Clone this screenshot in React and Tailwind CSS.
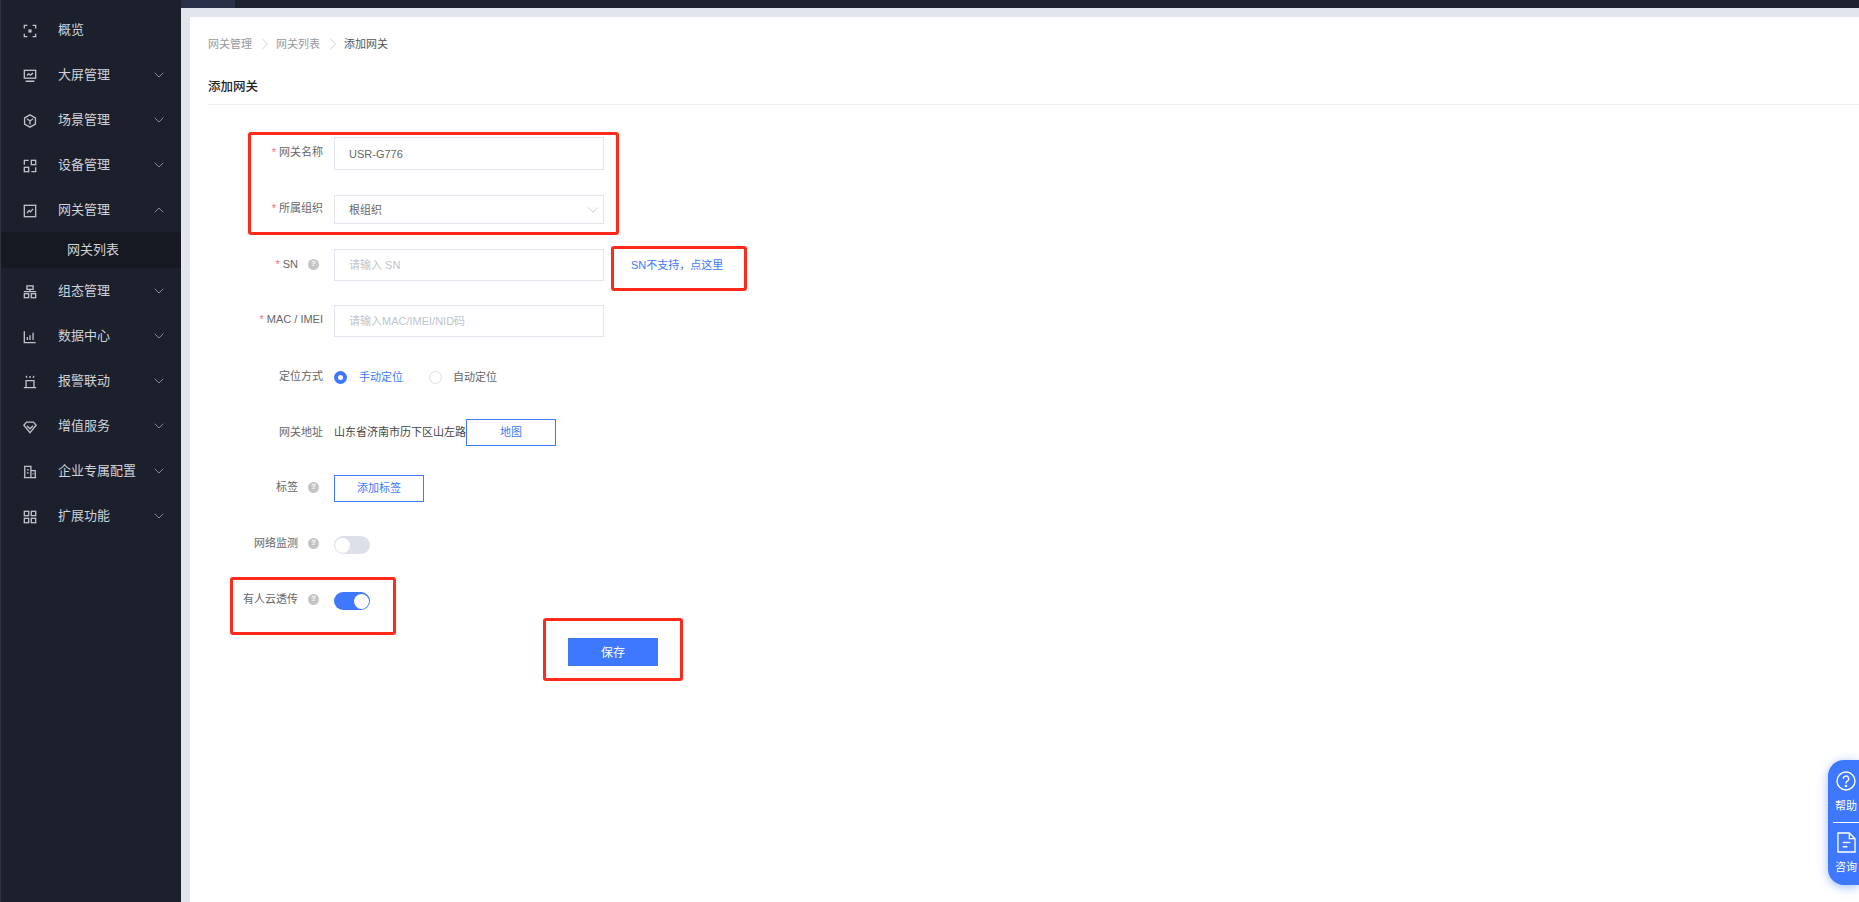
import React from 'react';
import { ChevronDown, ChevronUp, ChevronRight } from 'lucide-react';

const cn = '"Liberation Sans", "Noto Sans CJK SC", sans-serif';

// 侧边栏图标
const icons = {
  overview: (
    <>
      <path d="M1.5 5V1.5H5M11 1.5h3.5V5M14.5 11v3.5H11M5 14.5H1.5V11" />
      <rect x="6.2" y="6.2" width="3.6" height="3.6" fill="currentColor" stroke="none" />
    </>
  ),
  screen: (
    <>
      <rect x="1.5" y="1.5" width="13" height="9" />
      <path d="M4.5 7.5l2-2 2 1.5 3-2.5M3 14h10" />
    </>
  ),
  scene: (
    <>
      <path d="M8 1l6.2 3.5v7L8 15l-6.2-3.5v-7z" />
      <path d="M4.5 5.5L8 8l3.5-2.5M8 8v4" />
    </>
  ),
  device: (
    <>
      <path d="M6.5 1.5h-5v5" />
      <rect x="9.5" y="1.5" width="5" height="5" />
      <rect x="1.5" y="9.5" width="5" height="5" />
      <path d="M14.5 9.5v5h-5" />
    </>
  ),
  gateway: (
    <>
      <rect x="1.5" y="1.5" width="13" height="13" />
      <path d="M4.5 10.5l2.5-3 1.5 1.5 3-3.5" />
    </>
  ),
  config: (
    <>
      <rect x="4.5" y="1" width="7" height="4" />
      <path d="M1 7.5h14M8 5v2.5" />
      <rect x="1.5" y="10" width="5" height="4.5" />
      <rect x="9.5" y="10" width="5" height="4.5" />
    </>
  ),
  data: <path d="M1.5 1.5v13h13M5 11.5V8M8 11.5V6M11.5 11.5V3" />,
  alarm: <path d="M1 14.5h14M3.5 14.5V6.5h9v8M8 1v2.5M3.5 1l1 2.2M12.5 1l-1 2.2" />,
  service: (
    <>
      <path d="M1 6l3-3.5h8L15 6l-7 8.5z" />
      <path d="M4.5 6.5L8 10l3.5-3.5" />
    </>
  ),
  enterprise: <path d="M1 14.5h14M2 14.5V1.5h7v13M9 6.5h5v8M4.5 5.5h2M4.5 9h2M11 10h1" />,
  extend: (
    <>
      <rect x="1.5" y="1.5" width="5" height="5" />
      <rect x="9.5" y="1.5" width="5" height="5" />
      <rect x="1.5" y="9.5" width="5" height="5" />
      <rect x="9.5" y="9.5" width="5" height="5" />
    </>
  ),
};

function MenuItem({ icon, label, arrow, open }) {
  return (
    <div className="flex h-[45px] items-center pl-[22px] pr-[14px] text-[13px] text-[#cfd2d9]">
      <svg
        viewBox="0 0 16 16"
        fill="none"
        stroke="currentColor"
        strokeWidth="1.5"
        className="mt-[3px] h-[14px] w-[14px] text-[#c0c3cb]"
      >
        {icons[icon]}
      </svg>
      <span className="ml-[21px] flex-1">{label}</span>
      {arrow && (open ? (
        <ChevronUp size={16} strokeWidth={1} className="text-[#b9bcc3]" />
      ) : (
        <ChevronDown size={16} strokeWidth={1} className="text-[#b9bcc3]" />
      ))}
    </div>
  );
}

function Help() {
  return (
    <span className="ml-[10px] mr-[4px] flex h-[11px] w-[11px] items-center justify-center rounded-full bg-[#c5c5c5] text-[8px] font-bold leading-none text-white">
      ?
    </span>
  );
}

// 表单行：左边标签固定宽度，右边内容
function Row({ label, required, help, className, labelClass, children }) {
  return (
    <div className={`flex ${className}`}>
      <div className={`flex h-[16px] w-[115px] shrink-0 items-center justify-end text-[11px] text-[#666] ${labelClass}`}>
        {required && <span className="mr-[3px] text-[#f56c6c]">*</span>}
        <span>{label}</span>
        {help && <Help />}
      </div>
      {children}
    </div>
  );
}

function Toggle({ on }) {
  return (
    <div className={`ml-[11px] flex h-[18px] w-[36px] shrink-0 items-center rounded-full px-[1px] ${on ? 'justify-end bg-[#3d78ff]' : 'bg-[#dde0e8]'}`}>
      <div className="h-[15px] w-[15px] rounded-full bg-white" />
    </div>
  );
}

export default function App() {
  const inputCls = 'ml-[11px] flex h-full w-[270px] items-center border border-[#e2e5ee] pl-[14px] pt-[1px] text-[11px]';
  return (
    <div className="relative flex h-[902px] w-full overflow-hidden bg-[#e2e5ee]" style={{ fontFamily: cn }}>
      {/* 侧边栏 */}
      <aside className="h-full w-[181px] shrink-0 border-l border-[#30343f] bg-[#1c202c] pt-[7px]">
        <MenuItem icon="overview" label="概览" />
        <MenuItem icon="screen" label="大屏管理" arrow />
        <MenuItem icon="scene" label="场景管理" arrow />
        <MenuItem icon="device" label="设备管理" arrow />
        <MenuItem icon="gateway" label="网关管理" arrow open />
        <div className="flex h-[36px] items-center bg-[#161921] pl-[66px] text-[13px] text-[#cfd2d9]">网关列表</div>
        <MenuItem icon="config" label="组态管理" arrow />
        <MenuItem icon="data" label="数据中心" arrow />
        <MenuItem icon="alarm" label="报警联动" arrow />
        <MenuItem icon="service" label="增值服务" arrow />
        <MenuItem icon="enterprise" label="企业专属配置" arrow />
        <MenuItem icon="extend" label="扩展功能" arrow />
      </aside>

      <div className="flex min-w-0 flex-1 flex-col">
        {/* 顶部条 */}
        <div className="flex h-[8px] shrink-0 bg-[#1d202e]">
          <div className="w-[54px] bg-[#2a3045]" />
        </div>

        <main className="ml-[9px] mt-[9px] flex-1 bg-white pl-[18px]">
          <div className="mt-[20px] flex h-[14px] items-center text-[11px] text-[#999]">
            <span>网关管理</span>
            <ChevronRight size={20} strokeWidth={0.8} className="ml-[3px] mr-[1px] text-[#bbb]" />
            <span>网关列表</span>
            <ChevronRight size={20} strokeWidth={0.8} className="ml-[3px] mr-[1px] text-[#bbb]" />
            <span className="text-[#555]">添加网关</span>
          </div>
          <h1 className="mt-[28px] border-b border-[#eceef4] pb-[9px] text-[12.5px] font-medium leading-[16px] text-[#222]">添加网关</h1>

          {/* 表单 */}
          <Row label="网关名称" required className="mt-[32px] h-[33px]" labelClass="mt-[7px]">
            <div className={`${inputCls} text-[#666]`}>USR-G776</div>
          </Row>
          <Row label="所属组织" required className="mt-[25px] h-[29px]" labelClass="mt-[5px]">
            <div className={`${inputCls} justify-between pr-[1px] text-[#666]`}>
              根组织
              <ChevronDown size={18} strokeWidth={0.8} className="text-[#aaa]" />
            </div>
          </Row>
          <Row label="SN" required help className="mt-[25px] h-[32px]" labelClass="mt-[7px]">
            <div className={`${inputCls} text-[#c0c4cc]`}>请输入 SN</div>
            <a href="#" className="ml-[27px] flex h-full items-center text-[11px] text-[#3d78ff]">SN不支持，点这里</a>
          </Row>
          <Row label="MAC / IMEI" required className="mt-[24px] h-[32px]" labelClass="mt-[6px]">
            <div className={`${inputCls} text-[#c0c4cc]`}>请输入MAC/IMEI/NID码</div>
          </Row>
          <Row label="定位方式" className="mt-[29px] h-[22px]" labelClass="mt-[2px]">
            <div className="ml-[11px] flex h-[22px] items-center text-[11px]">
              <span className="flex h-[13px] w-[13px] items-center justify-center rounded-full bg-[#3d78ff]">
                <span className="h-[5px] w-[5px] rounded-full bg-white" />
              </span>
              <span className="ml-[12px] text-[#3d78ff]">手动定位</span>
              <span className="ml-[26px] h-[13px] w-[13px] rounded-full border border-[#dcdfe6]" />
              <span className="ml-[11px] text-[#666]">自动定位</span>
            </div>
          </Row>
          <Row label="网关地址" className="mt-[31px] h-[27px]" labelClass="mt-[5px]">
            <div className="ml-[11px] flex h-full items-center text-[11px] text-[#444]">
              山东省济南市历下区山左路
              <button className="h-full w-[90px] border border-[#3d78ff] text-[11px] text-[#3d78ff]">地图</button>
            </div>
          </Row>
          <Row label="标签" help className="mt-[29px] h-[27px]" labelClass="mt-[4px]">
            <button className="ml-[11px] h-full w-[90px] border border-[#3d78ff] text-[11px] text-[#3d78ff]">添加标签</button>
          </Row>
          <Row label="网络监测" help className="mt-[34px] h-[18px]" labelClass="-mt-[1px]">
            <Toggle />
          </Row>
          <Row label="有人云透传" help className="mt-[38px] h-[18px]" labelClass="-mt-[1px]">
            <Toggle on />
          </Row>
          <button className="ml-[360px] mt-[28px] h-[28px] w-[90px] bg-[#3d78ff] pt-[1px] text-[12px] text-white">保存</button>
        </main>
      </div>

      {/* 标注红框 */}
      <div className="pointer-events-none absolute left-[248px] top-[132px] h-[103px] w-[371px] rounded-[3px] border-[3px] border-[#ff2a1a]" />
      <div className="pointer-events-none absolute left-[611px] top-[246px] h-[45px] w-[136px] rounded-[3px] border-[3px] border-[#ff2a1a]" />
      <div className="pointer-events-none absolute left-[230px] top-[577px] h-[58px] w-[166px] rounded-[3px] border-[3px] border-[#ff2a1a]" />
      <div className="pointer-events-none absolute left-[543px] top-[618px] h-[63px] w-[140px] rounded-[3px] border-[3px] border-[#ff2a1a]" />

      {/* 右下角悬浮 */}
      <div className="absolute right-0 top-[760px] flex h-[125px] w-[31px] flex-col items-center rounded-l-[16px] bg-[#3d78ff] pl-[5px] text-[11px] text-white shadow-[0_2px_10px_rgba(61,120,255,0.5)]">
        <svg viewBox="0 0 20 20" fill="none" stroke="currentColor" strokeWidth="1.4" className="mt-[11px] h-[20px] w-[20px]">
          <circle cx="10" cy="10" r="9" />
          <path d="M7.3 7.8a2.7 2.7 0 1 1 4 2.3c-.9.5-1.3 1-1.3 2v.4" />
          <circle cx="10" cy="15" r=".6" fill="currentColor" />
        </svg>
        <span className="mt-[7px] leading-[16px]">帮助</span>
        <div className="-ml-[5px] mt-[8px] h-px w-[26px] self-end bg-white" />
        <svg viewBox="0 0 20 22" fill="none" stroke="currentColor" strokeWidth="1.4" className="mt-[9px] h-[21px] w-[19px]">
          <path d="M1 1h12l6 6v14H1z" />
          <path d="M13 1v6h6M6 11h8M6 15.5h5" />
        </svg>
        <span className="mt-[6px] leading-[16px]">咨询</span>
      </div>
    </div>
  );
}
